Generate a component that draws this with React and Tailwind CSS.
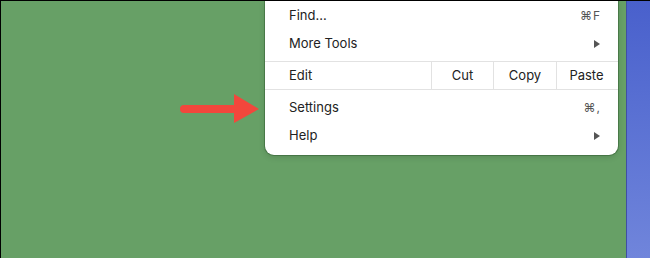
const font = { fontFamily: "Inter, 'Noto Sans', sans-serif" };

function Row({ label, right, arrow }) {
  return (
    <div className="h-[28px] flex items-center justify-between pl-[24px] pr-[17px] text-[13px] text-[#222]">
      <span>{label}</span>
      {right && <span className="text-[12px] text-[#555] tracking-[1px]">{right}</span>}
      {arrow && (
        <svg width="6" height="8" viewBox="0 0 6 8" className="mr-[1px]">
          <path d="M0 0 L6 4 L0 8 Z" fill="#555" />
        </svg>
      )}
    </div>
  );
}

function Arrow() {
  return (
    <svg width="82" height="32" viewBox="0 0 82 32" className="absolute left-[178px] top-[92px]">
      <line x1="5" y1="16" x2="58" y2="16" stroke="#f2473c" strokeWidth="8" strokeLinecap="round" />
      <path d="M55 1 L80 16 L55 30 Z" fill="#f2473c" />
    </svg>
  );
}

export default function App() {
  return (
    <div className="relative w-[650px] h-[258px] flex border-t border-l border-black overflow-hidden" style={font}>
      <div className="flex-1 bg-[#67a066] pl-[264px] pr-[8px]">
        <div className="bg-white rounded-b-[9px] shadow-[0_0_0_1px_rgba(30,70,30,0.35),0_2px_6px_rgba(0,0,0,0.15)] pt-[1px] pb-[5px]">
          <Row label="Find..." right="⌘F" />
          <Row label="More Tools" arrow />
          <div className="mt-[3px] border-y border-[#e2e2e2] h-[29px] flex text-[13px] text-[#222]">
            <div className="w-[166px] flex items-center pl-[24px]">Edit</div>
            <div className="w-[62px] flex items-center justify-center border-l border-[#e2e2e2]">Cut</div>
            <div className="w-[63px] flex items-center justify-center border-l border-[#e2e2e2]">Copy</div>
            <div className="flex-1 flex items-center justify-center border-l border-[#e2e2e2] pr-[2px]">Paste</div>
          </div>
          <div className="mt-[4px]">
            <Row label="Settings" right="⌘," />
            <Row label="Help" arrow />
          </div>
        </div>
      </div>
      <div className="w-[24px] border-l border-[#3f4fa3] bg-gradient-to-b from-[#4960cc] to-[#7085db]" />
      <Arrow />
    </div>
  );
}
